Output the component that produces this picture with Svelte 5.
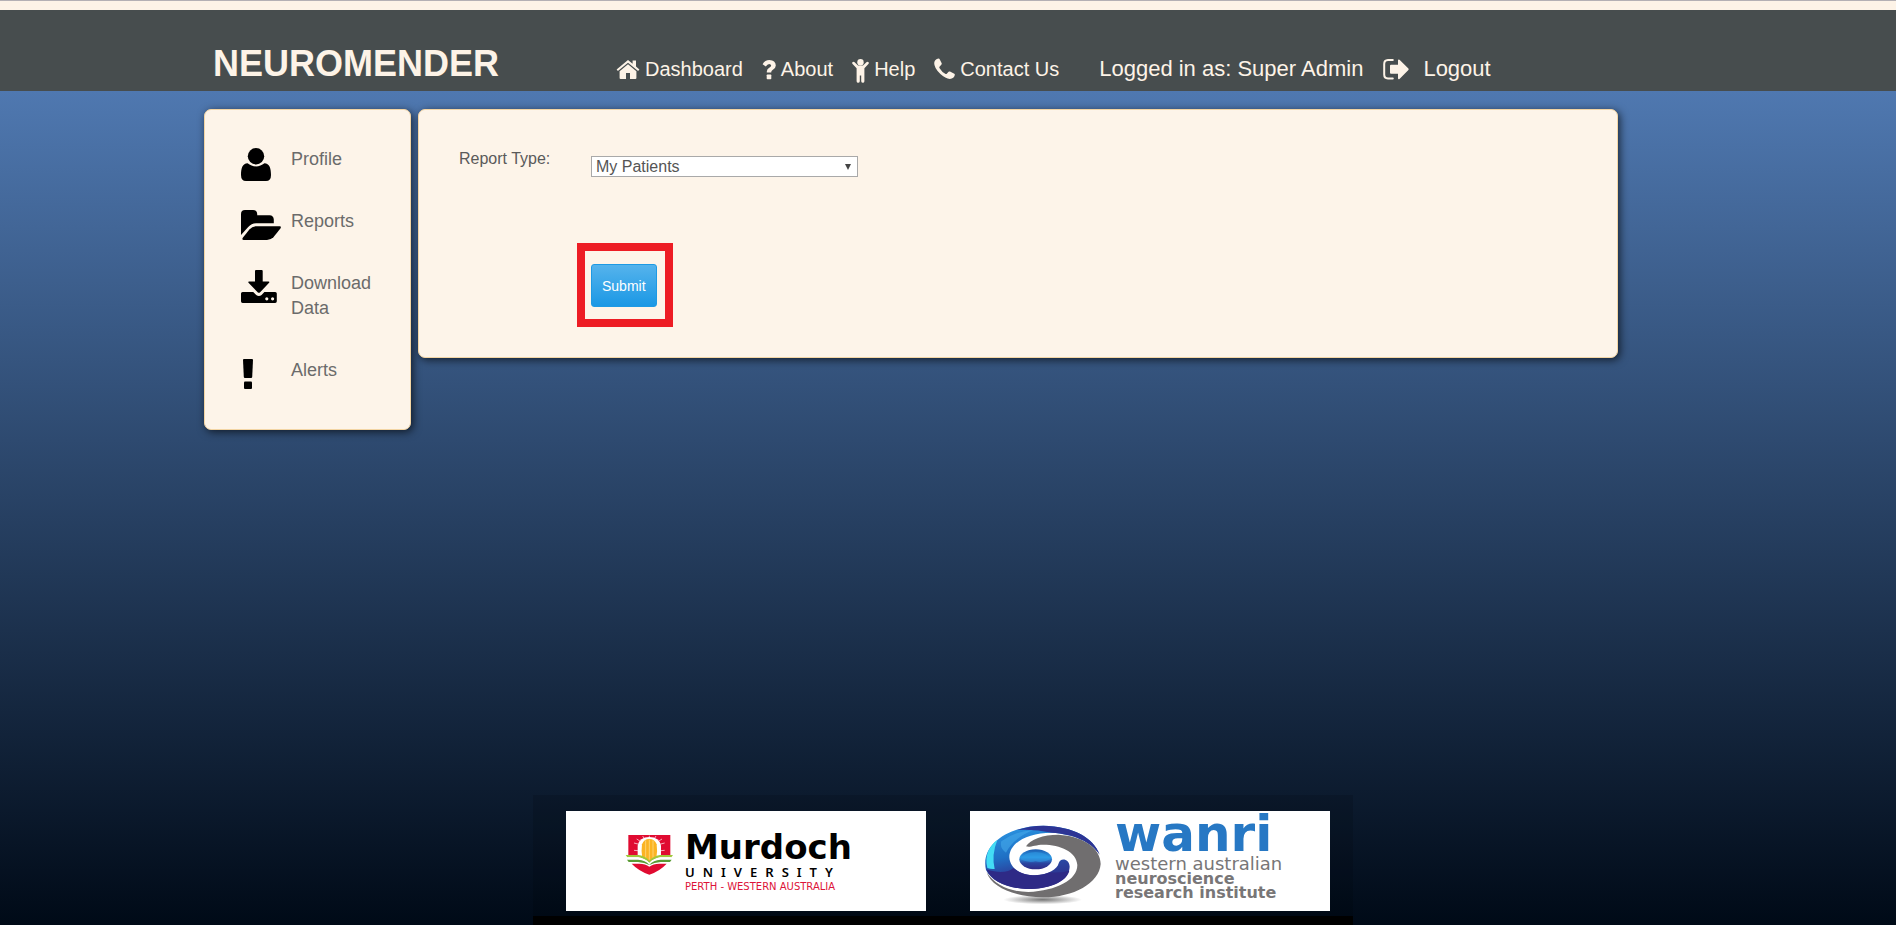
<script>
  const reportTypes = ['My Patients', 'Session Summary', 'Usage'];
  let reportType = $state('My Patients');
</script>

<div class="page">
  <header>
    <div class="brand">NEUROMENDER</div>
    <nav aria-label="Main">
      <a href="#dashboard">
        <svg width="24" height="26" viewBox="0 0 24 26" aria-hidden="true">
          <path d="M12 2 L0.6 11.6 L1.9 13 L12 4.7 L22.1 13 L23.4 11.6 L20 8.6 V2.4 H16.6 V5.8 Z" />
          <path d="M12 6.2 L3.6 13.2 V20 Q3.6 21 4.6 21 H10 V15 H14 V21 H19.4 Q20.4 21 20.4 20 V13.2 Z" />
        </svg>
        <span>Dashboard</span>
      </a>
      <a href="#about">
        <svg width="14" height="26" viewBox="0 0 14 26" aria-hidden="true">
          <path d="M0.6 6.2 Q3 2 7.4 2 Q13.6 2.4 13.8 7.4 Q13.8 10.2 10.6 12 Q9.2 12.8 9.2 14.6 H4.8 V13.6 Q4.8 11 7.6 9.6 Q9.2 8.8 9.2 7.6 Q9 6.2 7.2 6.1 Q5.4 6.1 3.8 8.6 Z" />
          <rect x="4.7" y="16.6" width="4.6" height="4.6" rx="0.7" />
        </svg>
        <span>About</span>
      </a>
      <a href="#help">
        <svg width="17" height="26" viewBox="0 0 17 26" aria-hidden="true">
          <circle cx="8.5" cy="4.2" r="3.2" />
          <path d="M0.4 4.2 Q1.5 3.2 2.6 4.2 L6 7.6 H11 L14.4 4.2 Q15.5 3.2 16.6 4.2 Q17.2 5.2 16.4 6.1 L12.4 10.2 V23.2 Q12.3 24.8 10.9 24.8 Q9.4 24.8 9.2 23.2 V17.5 H7.8 V23.2 Q7.6 24.8 6.1 24.8 Q4.7 24.8 4.6 23.2 V10.2 L0.6 6.1 Q-0.2 5.2 0.4 4.2 Z" />
        </svg>
        <span>Help</span>
      </a>
      <a href="#contact">
        <svg width="21" height="26" viewBox="0 0 21 26" aria-hidden="true">
          <path d="M0.2 5 Q0.6 1.4 4.6 0.5 Q5.4 0.5 5.8 1.5 L7.7 5.3 Q8 6.1 7.3 6.8 L5.3 8.9 Q5.2 9.4 5.6 10.2 Q7.8 13.9 11.6 16 Q12.3 16.3 12.8 15.8 L14.6 13.7 Q15.2 13.2 16 13.5 L20.3 15.8 Q21 16.3 20.8 17 Q20.2 20.6 15.8 21 Q11.6 20.8 6.4 16.1 Q0 9.8 0.2 5 Z" />
        </svg>
        <span>Contact Us</span>
      </a>
    </nav>
    <div class="session">
      <span>Logged in as: Super Admin</span>
      <a href="#logout">
        <svg width="26" height="26" viewBox="0 0 26 26" aria-hidden="true">
          <path d="M9.8 2.1 H5 Q1.2 2.3 1.2 6 V16.6 Q1.2 20.4 5 20.6 H9.8" fill="none" stroke="currentColor" stroke-width="2" stroke-linecap="round" />
          <path d="M15 2.4 Q15.2 1 16.5 1.8 L25.4 10.6 Q26 11.3 25.4 12 L16.5 20.9 Q15.2 21.7 15 20.3 V15.8 H8 Q7 15.7 7 14.8 V7.8 Q7 6.9 8 6.8 H15 Z" />
        </svg>
        <span>Logout</span>
      </a>
    </div>
  </header>

  <main>
    <aside class="card side">
      <ul>
        <li>
          <a href="#profile">
            <svg width="40" height="36" viewBox="0 -3 40 36" aria-hidden="true">
              <circle cx="15" cy="8.2" r="8.2" />
              <path d="M6.6 15.3 C9 17.4 12 18.4 15 18.4 S21 17.4 23.4 15.3 C28.4 15.6 30 20 30 27 Q30 33 25 33 H5 Q0 33 0 27 C0 20 1.6 15.6 6.6 15.3 Z" />
            </svg>
            <span>Profile</span>
          </a>
        </li>
        <li>
          <a href="#reports">
            <svg width="40" height="36" viewBox="0 -3 40 36" aria-hidden="true">
              <path d="M0 25 V4 Q0 0 4 0 H12 Q16 0 16.2 4 V5.2 H28.6 Q32.6 5.4 32.8 9.4 V13.2 H15 Q10.4 13.5 7.2 17 Z" />
              <path d="M14.6 16.2 H38.8 Q40.6 16.6 39.4 18.4 L32.4 27.2 Q29.6 29.9 26 30 H2.6 Q0.6 29.6 1.8 27.8 L8.4 19.4 Q11 16.4 14.6 16.2 Z" />
            </svg>
            <span>Reports</span>
          </a>
        </li>
        <li>
          <a href="#download">
            <svg width="40" height="36" viewBox="0 -1 40 36" aria-hidden="true">
              <path d="M15 0 H20.7 Q21.7 0 21.7 1 V11.4 H27.6 Q28.9 11.6 28.1 12.8 L18.9 22.4 Q17.9 23.3 16.9 22.4 L7.5 12.8 Q6.8 11.6 8 11.4 H14 V1 Q14 0 15 0 Z" />
              <path fill-rule="evenodd" d="M1.6 22 H12.2 L15.2 25 Q17.9 27.2 20.6 25 L23.4 22 H34.2 Q35.8 22 35.8 23.6 V31.2 Q35.8 33 34.2 33 H1.6 Q0 33 0 31.2 V23.6 Q0 22 1.6 22 Z M24.2 28.8 a1.6 1.6 0 1 0 3.2 0 a1.6 1.6 0 1 0 -3.2 0 Z M30 28.8 a1.6 1.6 0 1 0 3.2 0 a1.6 1.6 0 1 0 -3.2 0 Z" />
            </svg>
            <span>Download Data</span>
          </a>
        </li>
        <li>
          <a href="#alerts">
            <svg width="40" height="36" viewBox="0 -3 40 36" aria-hidden="true">
              <path d="M2.9 0 H11 Q12 0 12 1 L11.2 18 Q11.1 19 10.1 19 H3.9 Q2.9 19 2.8 18 L2 1 Q2 0 2.9 0 Z" />
              <rect x="3" y="22.4" width="8" height="7.6" rx="1" />
            </svg>
            <span>Alerts</span>
          </a>
        </li>
      </ul>
    </aside>

    <section class="card content">
      <form onsubmit={(event) => event.preventDefault()}>
        <label for="report-type">Report Type:</label>
        <select id="report-type" bind:value={reportType}>
          {#each reportTypes as type}
            <option>{type}</option>
          {/each}
        </select>
        <div class="highlight">
          <button type="submit">Submit</button>
        </div>
      </form>
    </section>
  </main>

  <footer>
    <div class="logo murdoch">
      <svg width="60" height="60" viewBox="0 0 180 180" aria-hidden="true">
        <path d="M25 30 H151 V96 H25 Z" fill="#e00b31" />
        <g stroke="#fff" stroke-width="2">
          <path d="M88 66 L42 54 M88 66 L50 42 M88 66 L68 33 M88 66 V32 M88 66 L108 33 M88 66 L126 42 M88 66 L134 54 M88 80 L42 76 M88 80 L134 76" />
        </g>
        <path d="M53 108 V62 Q58 36 88 36 Q118 36 123 62 V108 Z" fill="#fff" />
        <path d="M67 100 Q63 76 66 58 Q72 42 88 42 Q104 42 110 58 Q113 76 109 100 L88 110 Z" fill="#fbb423" />
        <path d="M77 46 V98 M88 44 V104 M99 46 V98" stroke="#fdda83" stroke-width="2.5" />
        <path d="M17 90 H56 Q78 94 88 108 Q98 94 120 90 H159 L154 97 H122 Q100 100 88 114 Q76 100 54 97 H22 Z" fill="#a0c83c" />
        <path d="M22 97 H54 Q76 100 88 114 Q100 100 122 97 H154 V104 H122 Q100 107 88 118 Q76 107 54 104 H22 Z" fill="#fff" />
        <path d="M21 104 H54 Q76 106 88 119 Q100 106 122 104 H155 L150 111 H122 Q102 112 88 120 Q74 112 54 111 H26 Z" fill="#5a9b34" />
        <path d="M35 116 H58 Q76 116 88 125 Q100 116 118 116 H140 Q120 138 88 149 Q56 138 35 116 Z" fill="#e00b31" />
      </svg>
      <div class="wordmark">
        <div class="name">Murdoch</div>
        <div class="kind">UNIVERSITY</div>
        <div class="place">PERTH - WESTERN AUSTRALIA</div>
      </div>
    </div>
    <div class="logo wanri">
      <svg width="130" height="90" viewBox="0 0 390 270" aria-hidden="true">
        <defs>
          <linearGradient id="ring" x1="0" y1="0" x2="0.35" y2="1">
            <stop offset="0" stop-color="#2c9be6" />
            <stop offset="0.5" stop-color="#1f6fc4" />
            <stop offset="0.72" stop-color="#2a45a0" />
            <stop offset="1" stop-color="#2e2a86" />
          </linearGradient>
          <linearGradient id="pupil" x1="0" y1="0" x2="0" y2="1">
            <stop offset="0" stop-color="#1c5cb0" />
            <stop offset="0.4" stop-color="#2c9be6" />
            <stop offset="0.7" stop-color="#2a45a0" />
            <stop offset="1" stop-color="#2e2a86" />
          </linearGradient>
          <radialGradient id="shade">
            <stop offset="0" stop-color="#777" />
            <stop offset="1" stop-color="#777" stop-opacity="0" />
          </radialGradient>
        </defs>
        <ellipse cx="188" cy="239" rx="118" ry="14" fill="url(#shade)" />
        <path d="M18 150 C0 72 90 17 190 17 C280 19 340 52 359 104 C335 65 280 42 215 38 C140 38 88 70 88 112 C90 147 125 166 165 166 C205 164 232 148 236 130 C240 112 268 115 269 140 C268 182 210 207 140 207 C80 204 35 184 18 150 Z" fill="url(#ring)" />
        <path d="M19 148 C60 162 86 156 100 144 C120 162 145 166 165 166 Q190 166 210 157 Q240 160 268 152 C258 188 205 207 140 207 C80 204 35 184 19 148 Z" fill="#2e2a86" />
        <path d="M190 17 C280 19 340 52 359 104 C335 65 280 42 215 38 Q160 26 110 30 Q150 17 190 17 Z" fill="#2d3494" />
        <path d="M22 144 C12 105 30 75 52 60 Q34 104 44 147 Q32 148 22 144 Z" fill="#43dcf5" />
        <path d="M64 64 Q104 34 160 30 Q100 54 78 98 Q58 84 64 64 Z" fill="#45a8ea" opacity="0.6" />
        <path d="M20 157 C45 195 90 216 145 216 C230 212 292 180 292 135 C290 95 240 74 190 74 C165 74 152 83 138 79 C150 58 190 44 235 44 C310 48 362 85 362 132 C358 190 280 232 190 232 C100 230 35 202 20 157 Z" fill="#706e6f" />
        <ellipse cx="167" cy="118" rx="49" ry="30" fill="url(#pupil)" />
        <path d="M122 118 Q128 98 167 96 Q205 98 211 118 Q188 130 167 124 Q145 130 122 118 Z" fill="#2f9de6" opacity="0.55" />
      </svg>
      <div class="wordmark">
        <div class="name">wanri</div>
        <div class="line light">western australian</div>
        <div class="line">neuroscience</div>
        <div class="line">research institute</div>
      </div>
    </div>
  </footer>
</div>

<style>
  :global(body) {
    margin: 0;
    background: #fff;
    font-family: "Liberation Sans", Arial, sans-serif;
  }

  .page {
    box-sizing: border-box;
    display: flex;
    flex-direction: column;
    min-height: calc(100vh - 1px);
    border-top: 1px solid #b4b0b4;
    background: linear-gradient(#fdf3e7 9px, #5079b3 9px, #4f78b0 90px, #000a17);
  }

  a {
    color: inherit;
    text-decoration: none;
  }

  svg {
    flex: none;
    fill: currentColor;
  }

  header {
    box-sizing: border-box;
    display: flex;
    align-items: flex-end;
    min-height: 81px;
    margin-top: 9px;
    padding: 24px 24px 7px 213px;
    background: #474d4e;
    color: #fdf3e7;
    white-space: nowrap;
  }

  .brand {
    margin-right: 117px;
    font-size: 36px;
    line-height: 40px;
    font-weight: bold;
  }

  nav {
    display: flex;
    gap: 19px;
    margin-right: 40px;
    font-size: 20px;
    line-height: 30px;
  }

  nav a,
  .session a {
    display: flex;
    align-items: center;
    gap: 5px;
  }

  header svg {
    margin-top: 4px;
  }

  .session {
    display: flex;
    align-items: center;
    gap: 20px;
    font-size: 22px;
    line-height: 30px;
  }

  .session a {
    gap: 14px;
  }

  main {
    display: flex;
    align-items: flex-start;
    gap: 7px;
    padding: 18px 278px 18px 204px;
  }

  .card {
    box-sizing: border-box;
    border: 1px solid #f3d5a4;
    border-radius: 7px;
    background: #fdf4e9;
    box-shadow: 2px 2px 8px rgba(0, 0, 0, 0.65);
  }

  .side {
    flex: none;
    width: 207px;
    padding: 37px 30px 9px 36px;
  }

  .side ul {
    margin: 0;
    padding: 0;
    list-style: none;
  }

  .side a {
    display: grid;
    grid-template-columns: 50px 1fr;
    align-items: start;
    font-size: 18px;
    line-height: 25px;
    color: #6b6b6b;
  }

  .side svg {
    margin-top: -2px;
    color: #000;
  }

  .side span {
    padding-bottom: 37px;
  }

  .content {
    flex: 1;
    padding: 39px 40px 30px;
  }

  form {
    display: grid;
    grid-template-columns: 132px 267px;
    align-items: start;
    font-size: 16px;
    line-height: 20px;
    color: #5a5a5a;
  }

  select {
    box-sizing: border-box;
    height: 21px;
    margin-top: 7px;
    padding: 0 20px 0 4px;
    border: 1px solid #a9a9a9;
    border-radius: 0;
    appearance: none;
    background: #fff url("data:image/svg+xml,%3Csvg xmlns='http://www.w3.org/2000/svg' width='6' height='6'%3E%3Cpath d='M0 0H6L3 6Z' fill='%23444'/%3E%3C/svg%3E") no-repeat right 6px center;
    font: inherit;
    line-height: 19px;
    color: #555;
  }

  .highlight {
    grid-column: 2;
    justify-self: start;
    margin: 66px 0 0 -14px;
    padding: 13px 8px 12px 6px;
    border: 8px solid #ed1c24;
  }

  button {
    display: block;
    box-sizing: border-box;
    height: 43px;
    padding: 0 10px;
    border: 1px solid #1e9ae4;
    border-radius: 3px;
    background: linear-gradient(#55b3ec, #1b98e5);
    font: 14px "Liberation Sans", Arial, sans-serif;
    color: #fff;
  }

  footer {
    display: flex;
    gap: 44px;
    align-self: flex-start;
    margin: auto 0 0 533px;
    padding: 16px 23px 5px 33px;
    border-bottom: 9px solid #000;
    background: rgba(0, 0, 0, 0.12);
    background-clip: padding-box;
  }

  .logo {
    box-sizing: border-box;
    display: flex;
    width: 360px;
    height: 100px;
    background: #fff;
    white-space: nowrap;
  }

  .murdoch {
    gap: 5px;
    padding: 14px 0 0 54px;
    font-family: "Noto Sans", sans-serif;
    color: #000;
  }

  .murdoch .wordmark {
    padding-top: 4px;
  }

  .murdoch .name {
    font: bold 34px/36px "DejaVu Sans", sans-serif;
  }

  .murdoch .kind {
    font-size: 13px;
    line-height: 14px;
    font-weight: 600;
    letter-spacing: 8px;
  }

  .murdoch .place {
    font: 10px/16px "DejaVu Sans", sans-serif;
    color: #dd1238;
  }

  .wanri {
    gap: 5px;
    padding: 9px 0 0 10px;
    font-family: "DejaVu Sans", sans-serif;
  }

  .wanri .name {
    margin-top: -8px;
    font-size: 50px;
    line-height: 44px;
    font-weight: bold;
    color: #2778c4;
  }

  .wanri .line {
    font-size: 16px;
    line-height: 14px;
    font-weight: bold;
    color: #787677;
  }

  .wanri .light {
    font-size: 18px;
    line-height: 16px;
    font-weight: normal;
  }

  @media (max-width: 1500px) {
    header {
      flex-wrap: wrap;
      padding-left: 24px;
    }

    .brand {
      margin-right: 40px;
    }

    main {
      padding-left: 24px;
      padding-right: 24px;
    }

    footer {
      align-self: center;
      flex-wrap: wrap;
      margin-left: 0;
    }
  }
</style>
